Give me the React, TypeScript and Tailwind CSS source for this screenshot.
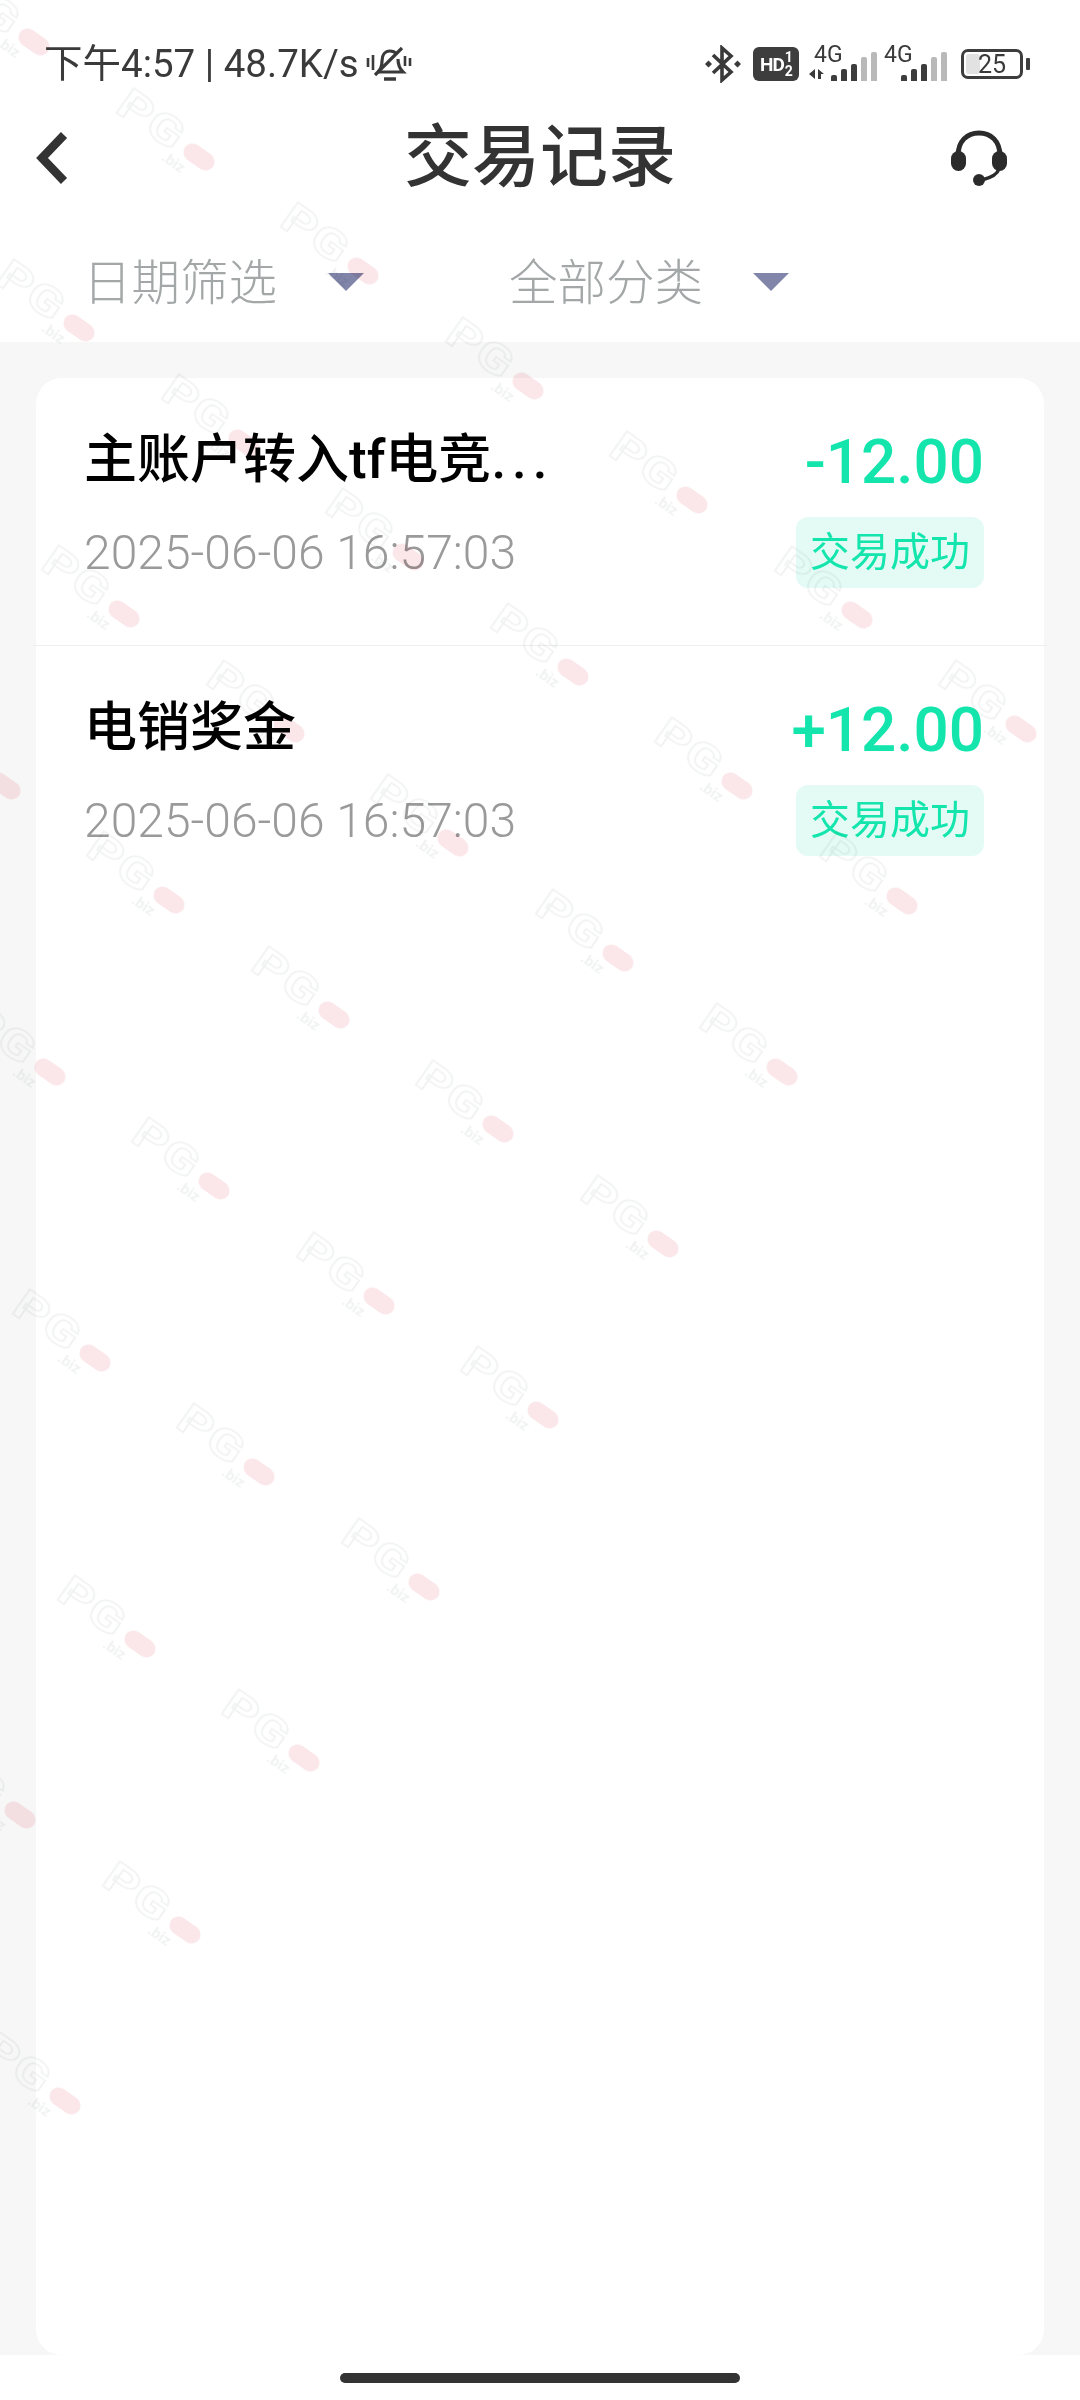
const green = "text-[#13e5ad]";

type Tx = { title: string; more?: boolean; time: string; amount: string };

const rows: Tx[] = [
  { title: "主账户转入tf电竞", more: true, time: "2025-06-06 16:57:03", amount: "-12.00" },
  { title: "电销奖金", time: "2025-06-06 16:57:03", amount: "+12.00" },
];

// tiled watermark: [row, first column, how many]
const tiles = [
  [0, 0, 7],
  [1, 0, 6],
  [2, 0, 5],
  [3, -1, 5],
  [4, -1, 4],
  [5, -1, 3],
  [6, -1, 2],
  [7, -2, 2],
  [8, -2, 1],
];

const marks = tiles.flatMap(([j, start, n]) =>
  Array.from({ length: n }, (_, k) => {
    const i = start + k;
    return { x: 34 + 164.5 * i + 45 * j, y: 42 + 114.5 * i + 286 * j };
  })
);

// the pill sits on the anchor point, the lettering runs up and to the left of it
function Watermark({ x, y }: { x: number; y: number }) {
  return (
    <div className="absolute h-0 w-0 rotate-[35deg] blur-[0.6px]" style={{ left: x, top: y }}>
      <span className="absolute left-[-96px] top-[-24px] origin-left scale-x-[1.25] text-[42px] leading-none font-bold tracking-[1px] text-transparent [-webkit-text-stroke:1.5px_#f1f2f2]">
        PG
      </span>
      <span className="absolute left-[-17px] top-[-9px] h-[18px] w-[34px] rounded-full bg-[#fbe6e9]" />
      <span className="absolute left-[-30px] top-[12px] text-[15px] leading-none font-bold text-[#f1f2f2]">.biz</span>
    </div>
  );
}

function MuteBell() {
  return (
    <svg width="46" height="38" viewBox="0 0 46 38" fill="none" stroke="#3a3a3a" strokeWidth="3.2">
      <path d="M12 27c3-3 4-6 4-11 0-6 3-10 8-10 3 0 5 1 7 3" />
      <path d="M32 14c0 5 1 9 5 13H12" />
      <path d="M18 34h12" strokeWidth="3.5" />
      <path d="M9 30 36 3" />
      <path d="M2 13v9M7 10v15M39 11v10M44 13v8" strokeWidth="2.6" />
    </svg>
  );
}

function Bluetooth() {
  return (
    <svg width="36" height="38" viewBox="0 0 36 38" fill="none">
      <path d="M8 10 26 27l-9 8V3l9 8L8 28" stroke="#3a3a3a" strokeWidth="3.6" />
      <path d="M0 19l3.500-3.500L7 19l-3.500 3.500zM29 19l3.500-3.500L36 19l-3.500 3.500z" fill="#3a3a3a" />
    </svg>
  );
}

function HdBadge() {
  return (
    <div className="flex h-[34px] w-[46px] items-center justify-center rounded-[6px] bg-[#3d3d3d] pl-[1px] font-bold text-white">
      <span className="text-[19px] leading-none tracking-[-1px]">HD</span>
      <span className="ml-[1px] flex flex-col items-center text-[14px] leading-[14px]">
        <span>1</span>
        <span>2</span>
      </span>
    </div>
  );
}

const barHeights = [6, 12, 17, 24, 29];

function Signal({ arrows }: { arrows?: boolean }) {
  return (
    <div className="relative h-[34px] w-[63px]">
      <span className="absolute left-0 top-[-4px] text-[23px] leading-[24px] text-[#3a3a3a]">4G</span>
      {arrows && (
        <svg className="absolute bottom-[1px] left-[-5px]" width="16" height="12" viewBox="0 0 16 12" fill="#3a3a3a">
          <path d="M6 1v10L0 6zM9 11V1l6 5h-3v5z" />
        </svg>
      )}
      <div className="absolute bottom-0 right-0 flex items-end gap-[4px]">
        {barHeights.map((h, i) => (
          <span
            key={h}
            className={i < 3 ? "w-[6px] rounded-t-[2px] bg-[#3d3d3d]" : "w-[6px] rounded-t-[2px] bg-[#b9b9b9]"}
            style={{ height: h }}
          />
        ))}
      </div>
    </div>
  );
}

function Battery() {
  return (
    <div className="flex items-center gap-[3px]">
      <div className="relative flex h-[30px] w-[62px] items-center justify-center rounded-[7px] border-[3px] border-[#3d3d3d]">
        <span className="absolute bottom-[2px] left-[2px] top-[2px] w-[14px] rounded-[3px] bg-[#e2e2e2]" />
        <span className="relative text-[25px] leading-none text-[#3a3a3a]">25</span>
      </div>
      <span className="h-[12px] w-[4px] rounded-[1px] bg-[#3d3d3d]" />
    </div>
  );
}

function Back() {
  return (
    <svg width="34" height="54" viewBox="0 0 34 54" fill="none">
      <path d="M29 4 7 27l22 23" stroke="#333" strokeWidth="8.500" />
    </svg>
  );
}

function Headset() {
  return (
    <svg width="58" height="58" viewBox="0 0 58 58" fill="none">
      <path d="M8 27C8 12 17 4 29 4s21 8 21 23" stroke="#2b2b2b" strokeWidth="5" />
      <rect x="1" y="22" width="15" height="20" rx="7.500" fill="#2b2b2b" />
      <rect x="42" y="22" width="15" height="20" rx="7.500" fill="#2b2b2b" />
      <path d="M49 40c-2 6-9 9-17 11" stroke="#2b2b2b" strokeWidth="3.500" />
      <circle cx="29" cy="51" r="6" fill="#2b2b2b" />
    </svg>
  );
}

function Caret() {
  return (
    <svg width="36" height="18" viewBox="0 0 36 18">
      <path d="M0 0h36L18 18z" fill="#8085a9" />
    </svg>
  );
}

function Row({ tx, last }: { tx: Tx; last: boolean }) {
  return (
    <div className={last ? "flex h-[268px] justify-between pl-[48px] pr-[60px]" : "-mx-[3px] flex h-[268px] justify-between border-b border-[#eeeeee] pl-[51px] pr-[63px]"}>
      <div className="pt-[46px]">
        <div className="text-[53px] leading-[72px] font-medium text-black">
          {tx.title}
          {tx.more && <span className="tracking-[6px]">...</span>}
        </div>
        <div className="mt-[27px] text-[48px] leading-[60px] font-light text-[#9a9a9a]">{tx.time}</div>
      </div>
      <div className="flex flex-col items-end pt-[48px]">
        <div className={`text-[62px] leading-[72px] font-medium ${green}`}>{tx.amount}</div>
        <div className={`mt-[19px] flex h-[71px] w-[188px] items-center justify-center rounded-[12px] bg-[#e4fbf5] text-[40px] ${green}`}>
          交易成功
        </div>
      </div>
    </div>
  );
}

export default function App() {
  return (
    <div className="relative flex h-[2400px] w-[1080px] flex-col overflow-hidden bg-white font-['Roboto','Noto_Sans_CJK_SC',sans-serif]">
      {/* status bar */}
      <div className="flex h-[110px] items-center justify-between pl-[44px] pr-[50px] pt-[18px] text-[#3a3a3a]">
        <div className="flex items-center gap-[7px]">
          <span className="text-[38.500px] leading-none">下午4:57 | 48.7K/s</span>
          <MuteBell />
        </div>
        <div className="flex items-center">
          <Bluetooth />
          <div className="ml-[12px]">
            <HdBadge />
          </div>
          <div className="ml-[15px]">
            <Signal arrows />
          </div>
          <div className="ml-[7px]">
            <Signal />
          </div>
          <div className="ml-[14px]">
            <Battery />
          </div>
        </div>
      </div>

      {/* title bar */}
      <div className="grid h-[90px] grid-cols-[1fr_auto_1fr] items-center pt-[6px]">
        <div className="pl-[35px]">
          <Back />
        </div>
        <h1 className="text-[68px] leading-none font-medium text-[#333]">交易记录</h1>
        <div className="justify-self-end pr-[72px]">
          <Headset />
        </div>
      </div>

      {/* filters */}
      <div className="flex h-[142px] items-center pl-[83px] pt-[22px] text-[48.500px] leading-none font-light text-[#a3a7a7]">
        <div className="flex w-[426px] items-center gap-[51px]">
          <span className="mt-[4px]">日期筛选</span>
          <Caret />
        </div>
        <div className="flex items-center gap-[50px]">
          <span className="mt-[4px]">全部分类</span>
          <Caret />
        </div>
      </div>

      <div className="flex flex-1 flex-col bg-[#f7f7f7] px-[36px] pt-[36px]">
        <div className="flex-1 rounded-[26px] bg-white">
          {rows.map((tx, i) => (
            <Row key={tx.amount} tx={tx} last={i === rows.length - 1} />
          ))}
        </div>
      </div>

      {/* home indicator */}
      <div className="flex h-[45px] justify-center pt-[18px]">
        <div className="h-[10px] w-[400px] rounded-full bg-[#333]" />
      </div>

      <div className="pointer-events-none absolute inset-0 mix-blend-multiply">
        {marks.map((m) => (
          <Watermark key={`${m.x}-${m.y}`} x={m.x} y={m.y} />
        ))}
      </div>
    </div>
  );
}
